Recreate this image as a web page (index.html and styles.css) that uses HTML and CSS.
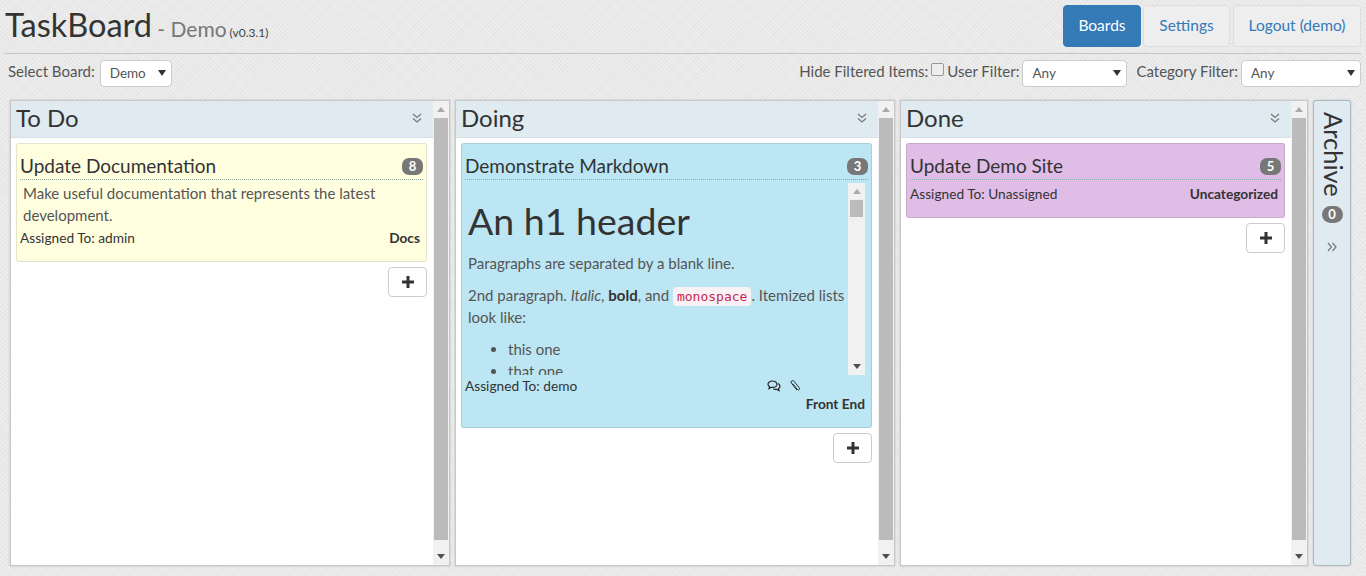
FILE: index.html
```html
<!DOCTYPE html>
<html lang="en">
<head>
    <meta charset="UTF-8">
    <title>TaskBoard</title>
    <link rel="stylesheet" href="styles.css">
</head>
<body>
    <header class="top">
        <h1 class="brand">TaskBoard <span class="brand-sub">- Demo</span><small class="brand-ver">(v0.3.1)</small></h1>
        <nav class="nav">
            <a class="nav-btn active nav-boards">Boards</a>
            <a class="nav-btn nav-settings">Settings</a>
            <a class="nav-btn nav-logout">Logout (demo)</a>
        </nav>
    </header>

    <div class="filters">
        <div class="filter-left">
            <label>Select Board:</label>
            <span class="select select-board"><select><option>Demo</option></select></span>
        </div>
        <div class="filter-right">
            <label>Hide Filtered Items:</label>
            <input type="checkbox" class="check">
            <label class="user-label">User Filter:</label>
            <span class="select select-filter"><select><option>Any</option></select></span>
            <label class="cat-label">Category Filter:</label>
            <span class="select select-filter"><select><option>Any</option></select></span>
        </div>
    </div>

    <main class="board">
        <section class="column col-wide">
            <div class="col-main">
                <h2 class="col-title">To Do
                    <svg class="chev" viewBox="0 0 10 10"><path d="M1 1l4 3.500L9 1M1 5.500L5 9l4-3.500"/></svg>
                </h2>
                <div class="col-body">
                    <article class="card yellow">
                        <div class="card-head"><span class="card-title">Update Documentation</span><span class="badge">8</span></div>
                        <p class="card-desc">Make useful documentation that represents the latest development.</p>
                        <div class="card-foot"><span>Assigned To: admin</span><b>Docs</b></div>
                    </article>
                    <button class="add"><svg viewBox="0 0 12 12"><path d="M4.500 0h3v4.500H12v3H7.500V12h-3V7.500H0v-3h4.500z"/></svg></button>
                </div>
            </div>
            <div class="scroll"><i class="up"></i><div class="track"><div class="thumb thumb-full"></div></div><i class="down"></i></div>
        </section>

        <section class="column col-wide">
            <div class="col-main">
                <h2 class="col-title">Doing
                    <svg class="chev" viewBox="0 0 10 10"><path d="M1 1l4 3.500L9 1M1 5.500L5 9l4-3.500"/></svg>
                </h2>
                <div class="col-body">
                    <article class="card blue">
                        <div class="card-head"><span class="card-title">Demonstrate Markdown</span><span class="badge">3</span></div>
                        <div class="md-wrap">
                            <div class="md">
                                <h1>An h1 header</h1>
                                <p>Paragraphs are separated by a blank line.</p>
                                <p>2nd paragraph. <em>Italic</em>, <strong>bold</strong>, and <code>monospace</code>. Itemized lists look like:</p>
                                <ul>
                                    <li>this one</li>
                                    <li>that one</li>
                                </ul>
                            </div>
                            <div class="scroll scroll-md"><i class="up"></i><div class="track"><div class="thumb thumb-small"></div></div><i class="down"></i></div>
                        </div>
                        <div class="card-foot foot-blue">
                            <span>Assigned To: demo</span>
                            <span class="foot-icons">
                                <svg viewBox="0 0 14 12"><path d="M5.500 1C3 1 1 2.400 1 4.200c0 1 .6 1.800 1.500 2.400L2 8.500l2.300-1.200c.4.100.8.100 1.200.1 2.500 0 4.500-1.400 4.500-3.200S8 1 5.500 1z"/><path d="M11 3.500c1.200.6 2 1.500 2 2.700 0 1-.6 1.800-1.500 2.400l.5 2-2.400-1.300c-1.200.2-2.400 0-3.300-.5"/></svg>
                                <svg class="clip" viewBox="0 0 24 26"><path d="M7 8l10 12.500a2.800 2.800 0 0 0 4.300-3.600L9.500 2.500a3.400 3.400 0 0 0-5.300 4.300l11.500 14.500a5 5 0 0 1-1 .9"/></svg>
                            </span>
                        </div>
                        <div class="card-cat"><b>Front End</b></div>
                    </article>
                    <button class="add"><svg viewBox="0 0 12 12"><path d="M4.500 0h3v4.500H12v3H7.500V12h-3V7.500H0v-3h4.500z"/></svg></button>
                </div>
            </div>
            <div class="scroll"><i class="up"></i><div class="track"><div class="thumb thumb-full"></div></div><i class="down"></i></div>
        </section>

        <section class="column col-done">
            <div class="col-main">
                <h2 class="col-title">Done
                    <svg class="chev" viewBox="0 0 10 10"><path d="M1 1l4 3.500L9 1M1 5.500L5 9l4-3.500"/></svg>
                </h2>
                <div class="col-body">
                    <article class="card purple">
                        <div class="card-head"><span class="card-title">Update Demo Site</span><span class="badge">5</span></div>
                        <div class="card-foot foot-done"><span>Assigned To: Unassigned</span><b>Uncategorized</b></div>
                    </article>
                    <button class="add"><svg viewBox="0 0 12 12"><path d="M4.500 0h3v4.500H12v3H7.500V12h-3V7.500H0v-3h4.500z"/></svg></button>
                </div>
            </div>
            <div class="scroll"><i class="up"></i><div class="track"><div class="thumb thumb-full"></div></div><i class="down"></i></div>
        </section>

        <aside class="archive">
            <span class="archive-title">Archive</span>
            <span class="badge badge-round">0</span>
            <svg class="chev chev-right" viewBox="0 0 10 10"><path d="M1 1l3.500 4L1 9M5.500 1L9 5l-3.500 4"/></svg>
        </aside>
    </main>
</body>
</html>
```

FILE: styles.css
```css
* {
    box-sizing: border-box;
}
html, body {
    height: 576px;
    overflow: hidden;
}
body {
    margin: 0;
    font-family: Lato, "Open Sans", sans-serif;
    font-size: 15px;
    color: #555;
    background-color: #e9e9e9;
    background-image:
        repeating-linear-gradient(45deg, rgba(255,255,255,.25) 0 1px, transparent 1px 3px),
        repeating-linear-gradient(-45deg, rgba(0,0,0,.02) 0 1px, transparent 1px 3px);
}

/* top bar */
.top {
    display: flex;
    justify-content: space-between;
    height: 54px;
    margin: 0 5px;
    padding-top: 4px;
    border-bottom: 1px solid #c4c4c4;
}
.brand {
    margin: 0;
    font-size: 32.500px;
    font-weight: 400;
    line-height: 42px;
    color: #333;
    white-space: nowrap;
}
.brand-sub {
    margin-left: -3px;
    font-size: 21px;
    color: #777;
}
.brand-ver {
    margin-left: 3px;
    font-size: 12px;
    color: #444;
}
.nav {
    display: flex;
    gap: 2px;
    height: 42px;
    margin-top: 1px;
}
.nav-btn {
    display: flex;
    align-items: center;
    justify-content: center;
    padding-bottom: 2px;
    font-size: 15.500px;
    color: #337ab7;
    background: #eee;
    border: 1px solid #ddd;
    border-radius: 4px;
}
.nav-btn.active {
    color: #fff;
    background: #337ab7;
    border-color: #337ab7;
}
.nav-boards { width: 78px; }
.nav-settings { width: 87px; margin-right: 1px; }
.nav-logout { width: 128px; }

/* filters */
.filters {
    display: flex;
    justify-content: space-between;
    height: 46px;
    padding: 6px 5px 0 8px;
}
.filter-left, .filter-right {
    display: flex;
    align-items: flex-start;
    line-height: 22px;
}
.select {
    position: relative;
    display: block;
    height: 27px;
}
.select::after {
    content: "";
    position: absolute;
    top: 10px;
    right: 6px;
    border: 4px solid transparent;
    border-top: 6px solid #333;
    border-bottom: 0;
}
.select select {
    appearance: none;
    width: 100%;
    height: 27px;
    padding: 0 9px 1px;
    font: inherit;
    font-size: 13.500px;
    color: #555;
    background: #fff;
    border: 1px solid #ccc;
    border-radius: 4px;
}
.select-board {
    width: 72px;
    margin-left: 5px;
}
.select-filter {
    width: 105px;
    margin-left: 3px;
}
.select-filter + .cat-label {
    margin-left: 9px;
}
.select-filter:last-child {
    width: 120px;
}
.check {
    appearance: none;
    width: 13px;
    height: 13px;
    margin: 3px 3px 0 3px;
    background: #eee;
    border: 1px solid #999;
    border-radius: 2px;
}

/* columns */
.board {
    display: flex;
    height: 466px;
    margin-left: 10px;
    gap: 5px;
}
.column {
    display: flex;
    background: #fff;
    border: 1px solid #c8c8c8;
    box-shadow: 0 0 2px rgba(0,0,0,.2);
}
.col-wide { width: 440px; }
.col-done { width: 408px; }
.col-main {
    flex: 1;
    min-width: 0;
}
.col-title {
    display: flex;
    justify-content: space-between;
    height: 37px;
    margin: 0;
    padding: 0 11px 0 5px;
    font-size: 24px;
    font-weight: 400;
    line-height: 33px;
    color: #333;
    background: #dfeaf1;
    border-bottom: 1px solid #d5e0e7;
}
.chev {
    flex: none;
    width: 10px;
    height: 10px;
    margin-top: 12px;
    fill: none;
    stroke: #777;
    stroke-width: 1.200;
}
.col-body {
    display: flex;
    flex-direction: column;
    align-items: flex-end;
    padding: 5px 6px 0 5px;
}

/* cards */
.card {
    width: 100%;
    padding: 0 3px;
    border: 1px solid rgba(0,0,0,.1);
    border-radius: 3px;
    color: #444;
}
.yellow { height: 119px; background: #ffffe0; }
.blue { height: 285px; background: #bce6f3; }
.purple { height: 75px; background: #e0bde6; }
.card-head {
    display: flex;
    justify-content: space-between;
    align-items: center;
    height: 36px;
    padding-top: 9px;
    border-bottom: 1px dotted #8aa;
}
.card-title {
    margin-top: -2px;
    font-size: 19px;
    color: #333;
}
.badge {
    display: inline-block;
    min-width: 21px;
    height: 17px;
    font-size: 13px;
    font-weight: 700;
    line-height: 17px;
    text-align: center;
    color: #fff;
    background: #777;
    border-radius: 7px;
}
.card-desc {
    margin: 2px 0 0 3px;
    font-size: 15px;
    line-height: 22px;
    color: #555;
}
.card-foot {
    display: flex;
    justify-content: space-between;
    margin-top: 2px;
    padding-right: 3px;
    font-size: 13.700px;
    line-height: 20px;
    color: #333;
}
.foot-done { margin-top: 4px; }
.foot-blue { padding-right: 66px; margin-top: 1px; }
.foot-icons {
    display: flex;
    gap: 7px;
    align-items: center;
}
.foot-icons svg {
    width: 14px;
    height: 12px;
    fill: none;
    stroke: #222;
    stroke-width: 1.200;
}
.foot-icons .clip {
    stroke-width: 2;
}
.card-cat {
    margin-top: -1px;
    padding-right: 3px;
    font-size: 13.700px;
    line-height: 18px;
    text-align: right;
    color: #333;
}
.add {
    display: flex;
    align-items: center;
    justify-content: center;
    width: 39px;
    height: 30px;
    margin-top: 5px;
    padding: 0;
    background: #fff;
    border: 1px solid #ccc;
    border-radius: 4px;
}
.add svg {
    width: 12px;
    height: 12px;
    fill: #333;
}

/* markdown box */
.md-wrap {
    display: flex;
    height: 192px;
    margin: 3px 3px 0 0;
    overflow: hidden;
}
.md {
    flex: 1;
    min-width: 0;
    padding-left: 3px;
    font-size: 15px;
    line-height: 22px;
    color: #555;
}
.md h1 {
    margin: 18px 0 11px;
    font-size: 37.500px;
    font-weight: 400;
    line-height: 40px;
    color: #333;
}
.md p {
    margin: 0 0 10px;
}
.md strong {
    color: #333;
}
.md code {
    padding: 2px 4px;
    font-family: "DejaVu Sans Mono", monospace;
    font-size: 13px;
    line-height: 16px;
    color: #c7254e;
    background: #f9f2f4;
    border-radius: 4px;
}
.md ul {
    margin: 0;
    padding-left: 40px;
}

/* fake scrollbars */
.scroll {
    flex: none;
    display: flex;
    flex-direction: column;
    align-items: center;
    width: 16px;
    background: #f1f1f1;
}
.track {
    flex: 1;
    width: 100%;
    padding: 0 1px;
}
.thumb {
    background: #bbb;
}
.thumb-full { height: 422px; }
.thumb-small { width: 100%; height: 17px; }
.up, .down {
    flex: none;
    width: 0;
    height: 0;
    margin: 6px 0;
    border: 4px solid transparent;
}
.up {
    border-top: 0;
    border-bottom: 5px solid #aaa;
}
.down {
    border-bottom: 0;
    border-top: 5px solid #505050;
}
.scroll-md {
    width: 17px;
}
.scroll-md .track {
    padding: 0 2px;
}

/* archive */
.archive {
    display: flex;
    flex-direction: column;
    align-items: center;
    width: 38px;
    padding-top: 11px;
    background: #dfeaf1;
    border: 1px solid #aab8c0;
    border-radius: 3px;
    box-shadow: 0 0 2px rgba(0,0,0,.2);
}
.archive-title {
    margin-left: 3px;
    writing-mode: vertical-rl;
    font-size: 25.500px;
    line-height: 24px;
    color: #333;
}
.badge-round {
    margin-top: 9px;
    line-height: 17px;
    border-radius: 9px;
}
.chev-right {
    margin-top: 19px;
}
```
